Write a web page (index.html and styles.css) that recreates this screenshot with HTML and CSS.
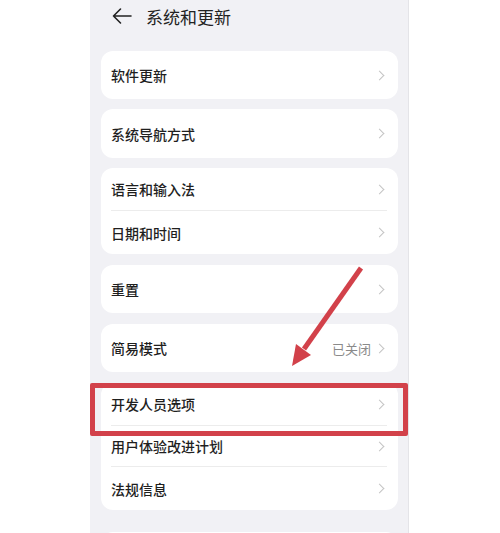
FILE: index.html
```html
<!DOCTYPE html>
<html lang="zh-CN">
<head>
    <meta charset="UTF-8">
    <meta name="viewport" content="width=device-width, initial-scale=1.0">
    <title>系统和更新</title>
    <link rel="stylesheet" href="styles.css">
</head>
<body>
    <div class="page">
        <div class="screen">
            <div class="header">
                <svg class="back" width="20" height="18" viewBox="0 0 20 18">
                    <path d="M1.5 9H19M8.5 2L1.5 9l7 7" fill="none" stroke="#222" stroke-width="1.6" stroke-linecap="round" stroke-linejoin="round"/>
                </svg>
                <span class="title">系统和更新</span>
            </div>

            <div class="card">
                <div class="row tall"><span class="label">软件更新</span><i class="chev"></i></div>
            </div>
            <div class="card">
                <div class="row tall nav"><span class="label">系统导航方式</span><i class="chev"></i></div>
            </div>
            <div class="card">
                <div class="row"><span class="label">语言和输入法</span><i class="chev"></i></div>
                <div class="row"><span class="label">日期和时间</span><i class="chev"></i></div>
            </div>
            <div class="card wide-gap">
                <div class="row tall"><span class="label">重置</span><i class="chev"></i></div>
            </div>
            <div class="card wide-gap">
                <div class="row tall"><span class="label">简易模式</span><span class="value">已关闭</span><i class="chev"></i></div>
            </div>
            <div class="card wide-gap">
                <div class="row"><span class="label">开发人员选项</span><i class="chev"></i></div>
                <div class="row short"><span class="label">用户体验改进计划</span><i class="chev"></i></div>
                <div class="row"><span class="label">法规信息</span><i class="chev"></i></div>
            </div>
            <div class="card next"></div>
        </div>

        <!-- annotation overlay -->
        <div class="highlight"></div>
        <svg class="arrow" width="500" height="533" viewBox="0 0 500 533">
            <line x1="361" y1="268" x2="304" y2="349" stroke="#d2414a" stroke-width="5"/>
            <polygon points="292,366 311,355 296,344" fill="#d2414a"/>
        </svg>
    </div>
</body>
</html>
```

FILE: styles.css
```css
body {
    margin: 0;
    background: #fff;
    font-family: "Noto Sans CJK SC", "Noto Sans", sans-serif;
    color: #1f1f1f;
}
.page {
    position: relative;
    width: 500px;
    height: 533px;
    overflow: hidden;
}
.screen {
    margin-left: 90px;
    width: 319px;
    height: 533px;
    background: #f1f1f5;
    border-right: 1px solid #e4e4e8;
    padding: 0 10px 0 11px;
    box-sizing: border-box;
}
.header {
    display: flex;
    align-items: center;
    height: 32px;
    margin-bottom: 19px;
    padding-left: 11px;
}
.back {
    margin-right: 14px;
}
.title {
    font-size: 17px;
    color: #222;
}
.card {
    background: #fff;
    border-radius: 12px;
    margin-top: 10px;
    padding: 0 11px 0 10px;
}
.card:nth-child(2) {
    margin-top: 0;
}
.card.wide-gap {
    margin-top: 11px;
}
.card.next {
    margin-top: 22px;
    height: 30px;
}
.row {
    display: flex;
    align-items: center;
    height: 43px;
    border-bottom: 1px solid #ececec;
    box-sizing: border-box;
}
.row:last-child {
    border-bottom: none;
}
.row.tall {
    height: 48px;
}
.row.nav {
    height: 49px;
}
.row.short {
    height: 41px;
}
.label {
    flex: 1;
    font-size: 14px;
    font-weight: 500;
}
.value {
    font-size: 13px;
    color: #8a8a8a;
    margin-right: 5px;
}
.chev {
    width: 6px;
    height: 6px;
    border-top: 1.3px solid #c4c4c4;
    border-right: 1.3px solid #c4c4c4;
    transform: rotate(45deg);
    margin-right: 4px;
}
.highlight {
    position: absolute;
    left: 90px;
    top: 383px;
    width: 318px;
    height: 53px;
    border: 5px solid #d2414a;
    border-radius: 2px;
    box-sizing: border-box;
}
.arrow {
    position: absolute;
    left: 0;
    top: 0;
}
```
